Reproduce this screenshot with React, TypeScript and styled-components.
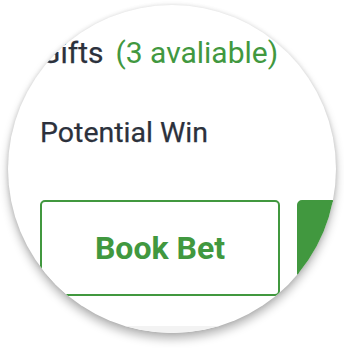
import React from 'react';
import styled, { createGlobalStyle } from 'styled-components';

const GlobalStyle = createGlobalStyle`
  html, body {
    margin: 0;
    padding: 0;
    background: #ffffff;
  }
  body {
    font-family: Roboto, 'Liberation Sans', Arial, sans-serif;
  }
`;

const Page = styled.div`
  width: 344px;
  height: 348px;
  padding: 5px 8px;
  box-sizing: border-box;
  background: #ffffff;
`;

const Lens = styled.div`
  width: 328px;
  height: 328px;
  border-radius: 50%;
  overflow: hidden;
  background: #ffffff;
  box-shadow: 0 6px 10px rgba(0, 0, 0, 0.28), 0 0 4px rgba(0, 0, 0, 0.12);
  display: flex;
  flex-direction: column;
`;

const Sheet = styled.div`
  padding: 30px 0 0 32px;
  display: flex;
  flex-direction: column;
  flex: 1;
`;

const Row = styled.div<{ $gap?: number }>`
  display: flex;
  align-items: baseline;
  margin-top: ${p => p.$gap ?? 0}px;
  line-height: 36px;
  white-space: nowrap;
`;

const Label = styled.span<{ $size?: number }>`
  color: #2c313c;
  font-size: ${p => p.$size ?? 30}px;
  font-weight: 400;
  -webkit-text-stroke: 0.25px #2c313c;
`;

const Count = styled.span`
  color: #41983f;
  font-size: 30px;
  margin-left: 12px;
`;

const Actions = styled.div`
  display: flex;
  gap: 17px;
  margin-top: 49px;
`;

const Button = styled.button<{ $filled?: boolean }>`
  flex-shrink: 0;
  width: 240px;
  height: 96px;
  box-sizing: border-box;
  border-radius: 5px;
  border: 2px solid #41983f;
  background: ${p => (p.$filled ? '#41983f' : '#ffffff')};
  color: ${p => (p.$filled ? '#ffffff' : '#41983f')};
  font-family: Roboto, 'Liberation Sans', Arial, sans-serif;
  font-size: 32px;
  font-weight: 700;
  padding: 0;
`;

const Footer = styled.div`
  margin-top: 30px;
  flex: 1;
  background: #f3f3f3;
`;

export default function App() {
  return (
    <>
      <GlobalStyle />
      <Page>
        <Lens>
          <Sheet>
            <Row>
              <Label>Gifts</Label>
              <Count>(3 avaliable)</Count>
            </Row>
            <Row $gap={44}>
              <Label $size={28.5}>Potential Win</Label>
            </Row>
            <Actions>
              <Button>Book Bet</Button>
              <Button $filled aria-label="Place Bet" />
            </Actions>
            <Footer />
          </Sheet>
        </Lens>
      </Page>
    </>
  );
}
